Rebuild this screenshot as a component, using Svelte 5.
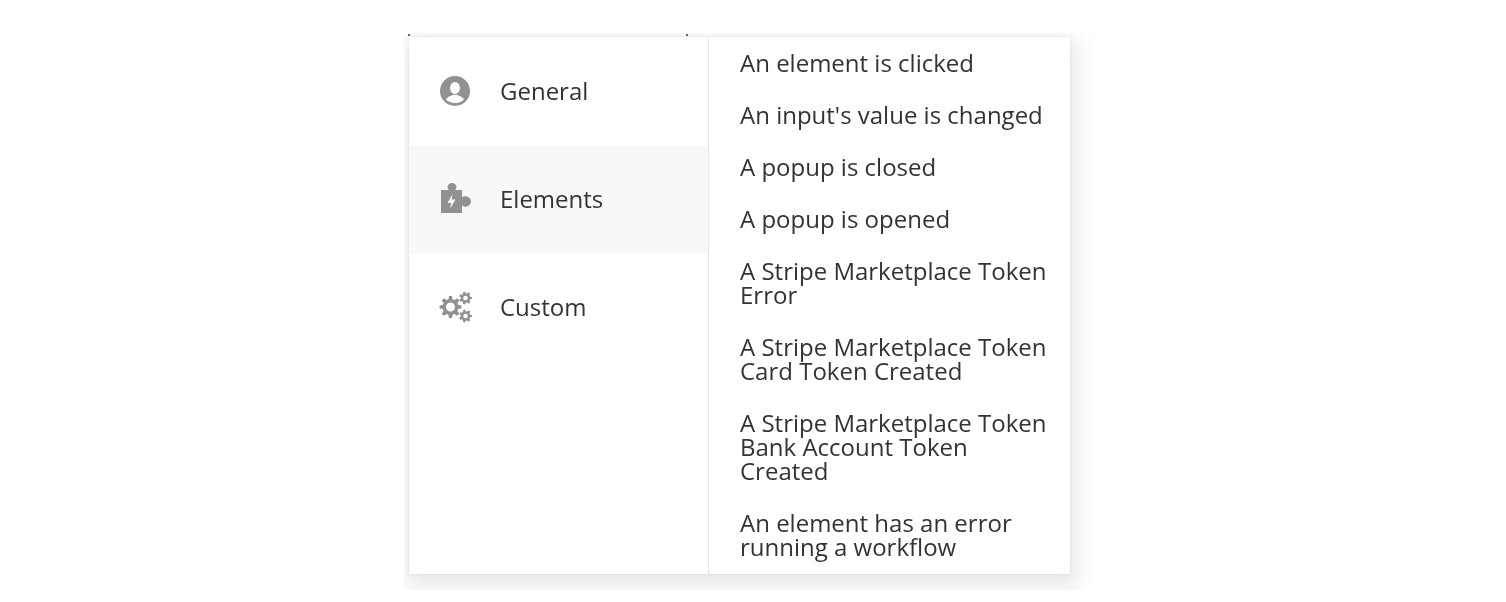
<script>
  const categories = [
    { label: 'General', icon: 'user' },
    { label: 'Elements', icon: 'puzzle', active: true },
    { label: 'Custom', icon: 'gears' },
  ];

  const events = [
    ['An element is clicked'],
    ["An input's value is changed"],
    ['A popup is closed'],
    ['A popup is opened'],
    ['A Stripe Marketplace Token', 'Error'],
    ['A Stripe Marketplace Token', 'Card Token Created'],
    ['A Stripe Marketplace Token', 'Bank Account Token', 'Created'],
    ['An element has an error', 'running a workflow'],
  ];

  // outline of a toothed wheel with a round hole, for fill-rule evenodd
  function gearPath(cx, cy, outer, inner, hole, teeth) {
    const pts = [];
    const step = (Math.PI * 2) / teeth;
    for (let i = 0; i < teeth; i++) {
      const a = i * step;
      const at = (r, t) => `${(cx + r * Math.cos(t)).toFixed(2)} ${(cy + r * Math.sin(t)).toFixed(2)}`;
      pts.push(at(inner, a - step * 0.32), at(outer, a - step * 0.18), at(outer, a + step * 0.18), at(inner, a + step * 0.32));
    }
    const circle = `M${cx - hole} ${cy}a${hole} ${hole} 0 1 0 ${hole * 2} 0a${hole} ${hole} 0 1 0 ${-hole * 2} 0z`;
    return `M${pts.join('L')}z${circle}`;
  }
</script>

<div class="stage">
  <div class="ticks"><i></i><i></i></div>
  <div class="menu">
    <ul class="cats">
      {#each categories as cat}
        <li class="cat" class:active={cat.active}>
          <span class="icon">
            {#if cat.icon === 'user'}
              <svg width="32" height="32" viewBox="0 0 32 32">
                <circle cx="16" cy="16" r="15" fill="#919191" />
                <ellipse cx="16" cy="13" rx="5" ry="6" fill="#fff" />
                <path d="M7 24.500c1.500-3 5-3.500 7-4.800h4c2 1.300 5.500 1.800 7 4.800-2 2.200-5.500 3.500-9 3.500s-7-1.300-9-3.500z" fill="#fff" />
              </svg>
            {:else if cat.icon === 'puzzle'}
              <svg width="32" height="32" viewBox="0 0 32 32">
                <path d="M2 7h7.800C9 6 8.500 5 8.500 4 8.500 1.800 10.500 0 13 0s4.500 1.800 4.500 4c0 1-.5 2-1.300 3H23v7.500c1-.8 2-1.200 3-1.200 2.400 0 6 1.500 6 5.200s-3.600 5.200-6 5.200c-1 0-2-.4-3-1.200V30H2z" fill="#919191" />
                <path d="M13.500 11 8.500 20h3.800l-1.300 6 5.500-9.500h-3.800z" fill="#f8f8f8" />
              </svg>
            {:else}
              <svg width="34" height="32" viewBox="0 0 34 32">
                <path fill="#919191" fill-rule="evenodd" d={gearPath(11.500, 16, 11, 8, 4.500, 8)} />
                <path fill="#919191" fill-rule="evenodd" d={gearPath(26.500, 7, 6.500, 4.800, 2.300, 7)} />
                <path fill="#919191" fill-rule="evenodd" d={gearPath(26.500, 25, 6.500, 4.800, 2.300, 7)} />
              </svg>
            {/if}
          </span>
          <span class="cat-label">{cat.label}</span>
        </li>
      {/each}
    </ul>
    <ul class="events">
      {#each events as lines}
        <li class="event">
          {#each lines as line}<span>{line}</span>{/each}
        </li>
      {/each}
    </ul>
  </div>
</div>

<style>
  :global(body) {
    background: #fff;
  }

  ul {
    list-style: none;
    margin: 0;
    padding: 0;
  }

  .stage {
    position: relative;
    box-sizing: border-box;
    width: 688px;
    height: 557px;
    margin: 33px 0 0 404px;
    padding: 4px 0 0 5px;
    overflow: hidden;
    border-radius: 0 0 6px 6px;
    font-family: "Open Sans", sans-serif;
    font-size: 24px;
    line-height: 24px;
    color: #333;
    filter: blur(0.6px);
  }

  .ticks i {
    position: absolute;
    top: 1px;
    width: 2px;
    height: 2px;
    background: #666;
  }

  .ticks i:first-child { left: 4px; }
  .ticks i:last-child { left: 282px; }

  .menu {
    display: flex;
    width: 661px;
    height: 537px;
    background: #fff;
    box-shadow: 0 0 2px 1px rgba(0, 0, 0, 0.06), 2px 8px 22px 6px rgba(0, 0, 0, 0.09);
  }

  .cats {
    width: 299px;
    flex: none;
    border-right: 1px solid #e6e6e6;
  }

  .cat {
    display: flex;
    align-items: center;
    box-sizing: border-box;
    height: 108px;
    padding-left: 30px;
    gap: 15px;
  }

  .cat.active {
    background: #f8f8f8;
    border-top: 1px solid #fff;
    padding-bottom: 1px;
  }

  .icon {
    display: flex;
    width: 46px;
    flex: none;
  }

  .events {
    flex: 1;
    padding-left: 31px;
  }

  .event {
    padding: 14px 0;
  }

  .event span {
    display: block;
    white-space: nowrap;
  }
</style>
